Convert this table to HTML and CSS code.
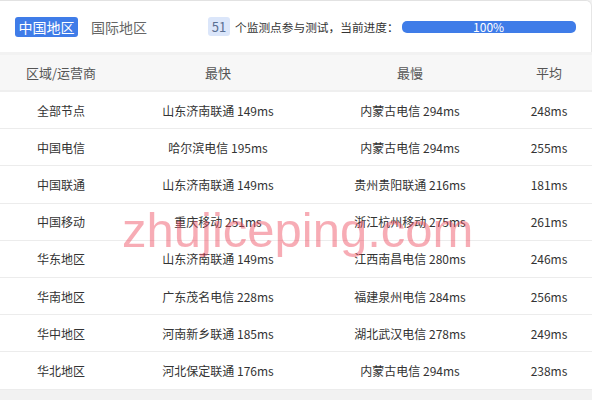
FILE: index.html
```html
<!DOCTYPE html>
<html lang="zh-CN">
<head>
<meta charset="utf-8">
<link rel="stylesheet" href="styles.css">
</head>
<body>
<div class="page">
  <div class="topbar">
    <div class="tabs">
      <span class="tab active">中国地区</span>
      <span class="tab">国际地区</span>
    </div>
    <div class="status">
      <span class="count">51</span>
      <span class="label">个监测点参与测试，当前进度：</span>
      <div class="progress"><div class="progress-fill" style="width:100%">100%</div></div>
    </div>
  </div>
  <div class="table">
    <div class="row head"><div>区域/运营商</div><div>最快</div><div>最慢</div><div>平均</div></div>
    <div class="row"><div>全部节点</div><div>山东济南联通 149ms</div><div>内蒙古电信 294ms</div><div>248ms</div></div>
    <div class="row"><div>中国电信</div><div>哈尔滨电信 195ms</div><div>内蒙古电信 294ms</div><div>255ms</div></div>
    <div class="row"><div>中国联通</div><div>山东济南联通 149ms</div><div>贵州贵阳联通 216ms</div><div>181ms</div></div>
    <div class="row"><div>中国移动</div><div>重庆移动 251ms</div><div>浙江杭州移动 275ms</div><div>261ms</div></div>
    <div class="row"><div>华东地区</div><div>山东济南联通 149ms</div><div>江西南昌电信 280ms</div><div>246ms</div></div>
    <div class="row"><div>华南地区</div><div>广东茂名电信 228ms</div><div>福建泉州电信 284ms</div><div>256ms</div></div>
    <div class="row"><div>华中地区</div><div>河南新乡联通 185ms</div><div>湖北武汉电信 278ms</div><div>249ms</div></div>
    <div class="row"><div>华北地区</div><div>河北保定联通 176ms</div><div>内蒙古电信 294ms</div><div>238ms</div></div>
  </div>
  <div class="watermark">zhujiceping.com</div>
</div>
</body>
</html>
```

FILE: styles.css
```css
* { box-sizing: border-box; }
html, body { margin: 0; padding: 0; }
body {
  width: 592px;
  height: 400px;
  overflow: hidden;
  background: #f2f2f2;
  font-family: "Noto Sans CJK SC", "Noto Sans", sans-serif;
  color: #333;
}
.page {
  position: relative;
  width: 592px;
  height: 400px;
}
.topbar {
  height: 52px;
  background: #fff;
  border-top: 1px solid #e2e2e2;
  border-right: 1px solid #e6e6e6;
  border-top-right-radius: 6px;
  display: flex;
  align-items: center;
  padding: 0 0 0 15px;
  white-space: nowrap;
}
.tabs {
  display: flex;
  align-items: center;
  gap: 13px;
  flex-shrink: 0;
}
.tab {
  font-size: 14px;
  line-height: 20px;
  color: #666;
}
.tab.active {
  background: #3f7ce8;
  color: #fff;
  border-radius: 3px;
  padding: 0 3.5px;
  height: 20px;
}
.status {
  display: flex;
  align-items: center;
  margin-left: 61px;
  flex-shrink: 0;
}
.count {
  background: #dbe6fa;
  color: #5a6f92;
  font-size: 13px;
  line-height: 19px;
  height: 19px;
  width: 22px;
  text-align: center;
  border-radius: 3px;
  margin-right: 5px;
}
.label {
  font-size: 11.7px;
  color: #333;
}
.progress {
  width: 174px;
  height: 12px;
  border-radius: 5px;
  background: #3f7ce8;
  margin-left: 3px;
}
.progress-fill {
  height: 12px;
  border-radius: 5px;
  color: #fff;
  font-size: 12px;
  line-height: 12px;
  text-align: center;
}
.table {
  margin-top: 3px;
  background: #fff;
}
.row {
  display: grid;
  grid-template-columns: 122px 192px 192px 86px;
  height: 37.2px;
  align-items: center;
  text-align: center;
  border-bottom: 1px solid #ececec;
  font-size: 12px;
  color: #333;
}
.row.head {
  height: 37px;
  background: #f7f7f7;
  font-size: 13px;
  color: #555;
  border-bottom: 2px solid #efefef;
}
.watermark {
  position: absolute;
  left: 122px;
  top: 200px;
  font-family: "Liberation Sans", Arial, sans-serif;
  font-size: 49px;
  line-height: 60px;
  color: rgba(238, 70, 90, 0.45);
  pointer-events: none;
  white-space: nowrap;
}
```
